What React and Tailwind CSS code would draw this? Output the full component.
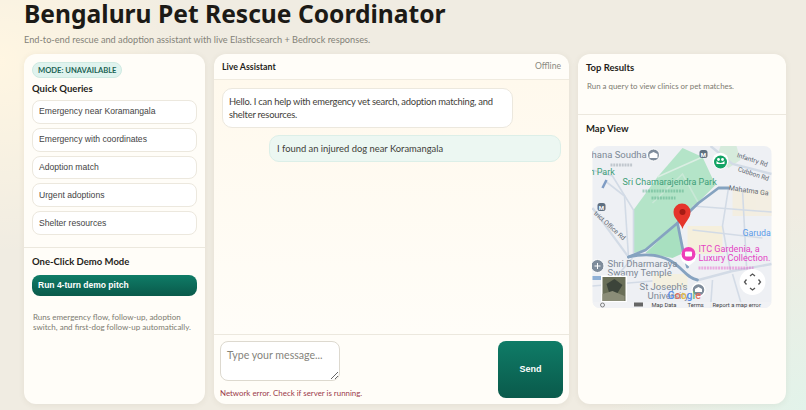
import React from "react";

const quickQueries = [
  "Emergency near Koramangala",
  "Emergency with coordinates",
  "Adoption match",
  "Urgent adoptions",
  "Shelter resources",
];

const MapView = () => {
  return (
    <svg viewBox="0 0 179 162" className="block w-full h-full">
      <rect width="179" height="162" fill="#eef0f4" />
      {/* warm blocks */}
      <path d="M95 80h35v28H95z" fill="#f5efdc" />
      <path d="M140 44h39v26h-39z" fill="#f3eee2" />
      <path d="M60 128h35v14H60z" fill="#f4f0e0" />
      {/* park */}
      <path d="M41 64 65 31 90 2l20 9 13 28-38 38-32 27-12 3z" fill="#b4e4c8" />
      <path d="M85 77l6 30-11 5-27-5z" fill="#a9e0c0" />
      <path d="M128 0h16l4 14-12 8-12-10z" fill="#d6ebdc" />
      {/* small roads */}
      <g fill="none" stroke="#d3dbe6" strokeWidth="1.6">
        <path d="M0 24 20 30 41 64 41 107" />
        <path d="M14 36 32 50 36 111" />
        <path d="M0 62 36 111" strokeWidth="2.2" />
        <path d="M106 134 140 125 179 118" strokeWidth="2.4" />
        <path d="M118 0 140 18 179 28" strokeWidth="2.4" />
        <path d="M136 42 130 80 138 125" />
        <path d="M100 60 179 66" />
        <path d="M100 84 170 92" />
        <path d="M150 44 154 120" />
        <path d="M20 135 40 112" />
        <path d="M0 140 60 135" />
        <path d="M120 134 118 162" />
        <path d="M140 128 150 162" />
        <path d="M65 31 110 11" stroke="#dbeee3" />
        <path d="M60 57 90 28 106 57" stroke="#c9e8d6" />
      </g>
      <path d="M0 132h12" stroke="#8fb0d6" strokeWidth="4" />
      <path d="M14 34 10 42" stroke="#7f9cc4" strokeWidth="2.5" />
      {/* main road */}
      <g fill="none" stroke="#86a3c0" strokeWidth="2.8" strokeLinejoin="round" strokeLinecap="round">
        <path d="M136 42h-10L106 57 85 77 53 104 36 111" />
        <path d="M36 111C50 108 66 107 80 116 90 122 94 132 105 134" />
        <path d="M85 77l6 30 4 14" />
      </g>
      {/* labels */}
      <g fontFamily="Roboto, sans-serif" fontSize="9.5" fill="#7d8996">
        <text x="-1" y="12">hana Soudha</text>
        <text x="15" y="121">Shri Dharmaraya</text>
        <text x="15" y="130">Swamy Temple</text>
        <text x="47" y="144">St Joseph's</text>
        <text x="55" y="153">University</text>
      </g>
      <text x="-3" y="29" fontFamily="Roboto, sans-serif" fontSize="9" fill="#3f9f78">n Park</text>
      <text x="30" y="39" fontFamily="Roboto, sans-serif" fontSize="9" fill="#3f9f78">Sri Chamarajendra Park</text>
      {/* kannada labels, too small to read */}
      <g fill="none" strokeWidth="3" strokeDasharray="2 0.8" opacity="0.4">
        <path d="M50 45h42" stroke="#3f9f78" />
        <path d="M59 52h24" stroke="#3f9f78" />
        <path d="M18 19h22" stroke="#7d8996" />
        <path d="M106 122h55" stroke="#e344c4" />
      </g>
      <g fontFamily="Roboto, sans-serif" fontSize="6.6" fill="#5d6670">
        <text transform="translate(144 11) rotate(18)">Infantry Rd</text>
        <text transform="translate(145 25) rotate(18)">Cubbon Rd</text>
        <text transform="translate(136 44) rotate(8)" fontSize="7">Mahatma Ga</text>
        <text transform="translate(1 68) rotate(42)">trict Office Rd</text>
      </g>
      <text x="150" y="90" fontFamily="Roboto, sans-serif" fontSize="8.800" fill="#5a9be8">Garuda</text>
      <g fontFamily="Roboto, sans-serif" fontSize="9.100" fill="#e344c4">
        <text x="106" y="106">ITC Gardenia, a</text>
        <text x="106" y="115">Luxury Collection.</text>
      </g>
      {/* pois */}
      <circle cx="61" cy="9" r="6" fill="#7f8c9b" stroke="#fff" />
      <path d="M57 8l4-2 4 2v4h-8z" fill="#fff" />
      <rect x="107" y="4" width="8" height="8" rx="2.5" fill="#5f6f80" />
      <text x="111" y="10.5" textAnchor="middle" fontFamily="Roboto, sans-serif" fontSize="6" fontWeight="700" fill="#fff">M</text>
      <rect x="5" y="57" width="8" height="8" rx="2.5" fill="#5f6f80" />
      <text x="9" y="63.5" textAnchor="middle" fontFamily="Roboto, sans-serif" fontSize="6" fontWeight="700" fill="#fff">M</text>
      <path d="M128 24l-5-3a8 8 0 1 1 10 0z" fill="#fff" />
      <circle cx="128" cy="16" r="6.5" fill="#12a364" />
      <path d="M124 15q4 4 8 0v3h-8z" fill="#fff" />
      <circle cx="126" cy="13.5" r="1.4" fill="#fff" />
      <circle cx="130" cy="13.5" r="1.4" fill="#fff" />
      <circle cx="5" cy="120" r="6.5" fill="#7f8c9b" stroke="#fff" />
      <path d="M2 120h6M5 117v6" stroke="#fff" strokeWidth="1" />
      <path d="M96 120l-4-3a8 8 0 1 1 8 0z" fill="#fff" />
      <circle cx="96" cy="108" r="7" fill="#ee3fb8" />
      <rect x="92.5" y="105.5" width="7" height="5" rx="1" fill="#fff" />
      <circle cx="106" cy="144" r="6.5" fill="#7f8c9b" stroke="#fff" strokeWidth="1.4" />
      <path d="M102.5 143l3.500-2 3.500 2v3h-7z" fill="#fff" />
      {/* red pin */}
      <path d="M90 83C88 76 81 73 81 66a8.500 8.500 0 0 1 17 0C98 73 92 76 90 83z" fill="#e5352b" />
      <circle cx="90" cy="66" r="3" fill="#a61b14" />
      {/* controls */}
      <circle cx="160" cy="136" r="13" fill="#fff" />
      <g fill="none" stroke="#555" strokeWidth="1.3">
        <path d="M157.500 130l2.500-2 2.500 2" />
        <path d="M157.500 142l2.500 2 2.500-2" />
        <path d="M154 133.500l-2 2.500 2 2.500" />
        <path d="M166 133.500l2 2.500-2 2.500" />
      </g>
      <rect x="8.500" y="129.500" width="26" height="27" fill="#fff" />
      <rect x="10" y="131" width="23" height="24" fill="#6a6f58" />
      <path d="M14 138l8-5 8 6-5 8-8 1z" fill="#3c443a" />
      <path d="M10 148l10-3 12 5v5H10z" fill="#8b8d78" />
      <text fontFamily="Roboto, sans-serif" fontSize="10.500" fontWeight="500" y="153">
        <tspan x="75" fill="#5b8fe6">G</tspan>
        <tspan fill="#e0705f">o</tspan>
        <tspan fill="#e8c04a">o</tspan>
        <tspan fill="#5b8fe6">g</tspan>
        <tspan fill="#62b574">l</tspan>
        <tspan fill="#e0705f">e</tspan>
      </text>
      {/* attribution bar */}
      <rect y="156" width="179" height="6" fill="#f1f2f4" opacity="0.85" />
      <g fontFamily="Roboto, sans-serif" fontSize="5.800" fill="#444">
        <text x="59" y="161">Map Data</text>
        <text x="95" y="161">Terms</text>
        <text x="120" y="161">Report a map error</text>
      </g>
      <rect x="41.500" y="156.500" width="9" height="4" fill="#666" />
      <circle cx="10" cy="159" r="2" fill="none" stroke="#666" strokeWidth="0.8" />
    </svg>
  );
};

export default function App() {
  return (
    <div className="h-[410px] w-[806px] overflow-hidden bg-[#f0ece2] bg-[radial-gradient(circle_at_0%_15%,#fff6e2,transparent_22%),radial-gradient(circle_at_100%_100%,#e2f3ea,transparent_22%)] px-6 font-['Lato',sans-serif] text-[#1f1d1a]">
      <h1 className="font-['Noto_Sans',sans-serif] text-[24.6px] font-bold leading-[28px] text-[#1c1a16]">Bengaluru Pet Rescue Coordinator</h1>
      <p className="mt-[5px] text-[9.2px] leading-[14px] text-[#838278]">
        End-to-end rescue and adoption assistant with live Elasticsearch + Bedrock responses.
      </p>

      <div className="mt-[7px] grid h-[350px] grid-cols-[181px_355px_208px] gap-[9px]">
        {/* left */}
        <div className="flex flex-col rounded-xl bg-[#fffdf8] shadow-[0_1px_6px_rgba(90,80,50,0.08)]">
          <div className="border-b border-[#ece8de] px-2 pt-2 pb-[12px]">
            <span className="block w-fit rounded-full border border-[#cfeae2] bg-[#e0f3ee] px-[5px] text-[7.6px] leading-[14px] font-bold text-[#1b6354]">
              MODE: UNAVAILABLE
            </span>
            <h2 className="mt-[3px] text-[9.5px] leading-[16px] font-bold">Quick Queries</h2>
            <div className="mt-[3px] flex flex-col gap-[4px]">
              {quickQueries.map((item) => (
                <button
                  key={item}
                  className="h-[23.800px] rounded-lg border border-[#ece8de] bg-white px-[6px] text-left font-['Liberation_Sans',sans-serif] text-[8.6px] text-[#444]"
                >
                  {item}
                </button>
              ))}
            </div>
          </div>
          <div className="px-2 pt-[6px]">
            <h2 className="text-[9.5px] leading-[16px] font-bold">One-Click Demo Mode</h2>
            <button className="mt-[3px] h-[21px] w-full rounded-lg bg-gradient-to-b from-[#0f7c67] to-[#0a5a4b] px-[6px] text-left font-['Liberation_Sans',sans-serif] text-[8.5px] font-bold text-white">
              Run 4-turn demo pitch
            </button>
            <p className="mt-[16px] px-[1px] text-[8px] leading-[10px] text-[#7c7b70]">
              Runs emergency flow, follow-up, adoption switch, and first-dog follow-up automatically.
            </p>
          </div>
        </div>

        {/* chat */}
        <div className="flex flex-col rounded-xl bg-[#fffdf8] shadow-[0_1px_6px_rgba(90,80,50,0.08)]">
          <div className="flex h-[26px] items-center justify-between border-b border-[#f0ebdf] px-2">
            <span className="text-[8.8px] font-bold">Live Assistant</span>
            <span className="text-[8.6px] text-[#8b8a80]">Offline</span>
          </div>
          <div className="flex flex-1 flex-col gap-[7px] bg-gradient-to-b from-[#fff9ed] to-[#fffdf8] p-2">
            <div className="w-[291px] rounded-[10px] border border-[#ece8de] bg-white px-[6px] py-[5.5px] text-[9.4px] leading-[13.5px] tracking-[-0.22px] text-[#3f3e39]">
              Hello. I can help with emergency vet search, adoption matching, and shelter resources.
            </div>
            <div className="ml-auto w-[292px] rounded-[10px] border border-[#dcefe8] bg-[#ecf7f2] px-[7px] py-[5.5px] text-[9.4px] leading-[14px] text-[#3f3e39]">
              I found an injured dog near Koramangala
            </div>
          </div>
          <div className="flex h-[70px] justify-between border-t border-[#ece8de] pt-[6px] pr-[6px] pl-[6px]">
            <div>
              <textarea
                placeholder="Type your message..."
                className="block h-[40px] w-[120px] rounded-lg border border-[#ddd9cf] bg-white px-[6px] py-[5px] text-[10.6px] leading-[16px] placeholder:text-[#85847c]"
              />
              <p className="mt-[6px] text-[7.9px] leading-[12px] text-[#9b3a4a]">Network error. Check if server is running.</p>
            </div>
            <button className="h-[57px] w-[65px] rounded-lg bg-gradient-to-b from-[#0f7c67] to-[#0a5a4b] font-['Liberation_Sans',sans-serif] text-[9px] font-bold text-white">
              Send
            </button>
          </div>
        </div>

        {/* right */}
        <div className="flex flex-col rounded-xl bg-[#fffdf8] shadow-[0_1px_6px_rgba(90,80,50,0.08)]">
          <div className="h-[61px] border-b border-[#ece8de] px-2 pt-[6px]">
            <h2 className="text-[9.5px] leading-[16px] font-bold">Top Results</h2>
            <p className="mt-[4px] px-[1px] text-[7.9px] leading-[13px] text-[#7c7b70]">Run a query to view clinics or pet matches.</p>
          </div>
          <div className="px-2 pt-[6px]">
            <h2 className="text-[9.5px] leading-[16px] font-bold">Map View</h2>
            <div className="mx-[6px] mt-[9px] h-[162px] overflow-hidden rounded-lg">
              <MapView />
            </div>
          </div>
        </div>
      </div>
    </div>
  );
}
